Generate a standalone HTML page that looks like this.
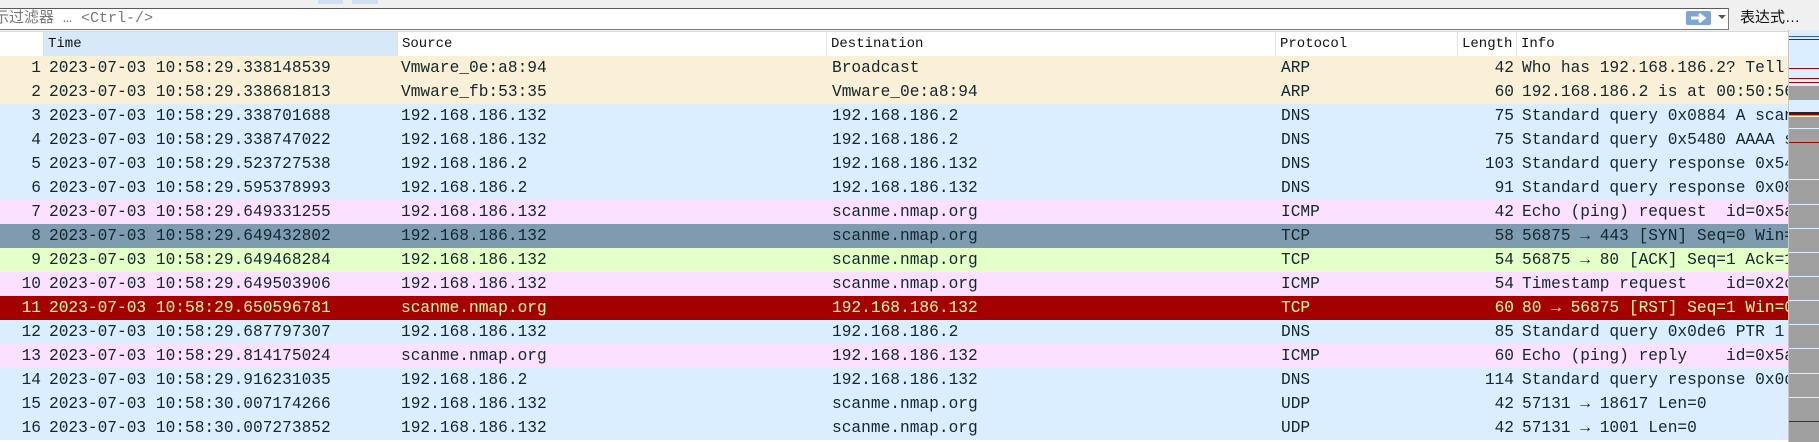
<!DOCTYPE html>
<html><head><meta charset="utf-8">
<style>
*{margin:0;padding:0;box-sizing:border-box}
body{width:1819px;height:442px;overflow:hidden;background:#fff;position:relative;font-family:"Liberation Mono",monospace;color:#12272e}
.top{position:absolute;left:0;top:0;width:1819px;height:31px;background:#f0f0f0}
.inp{position:absolute;left:-2px;top:8px;width:1731px;height:22px;background:#fff;border:1px solid #7a7a7a;border-top-color:#5a5a5a}
.ft{position:absolute;left:-6px;top:9px;font:15px "Liberation Mono","Noto Sans CJK SC",monospace;color:#777;line-height:20px;white-space:pre}
.arrow{position:absolute;left:1686px;top:11px;width:25px;height:14px;background:#7da6d6;border-radius:2px}
.dd{position:absolute;left:1718px;top:15px;width:0;height:0;border-left:4px solid transparent;border-right:4px solid transparent;border-top:4px solid #555}
.expr{position:absolute;left:1740px;top:8px;font:15px "Liberation Sans","Noto Sans CJK SC",sans-serif;line-height:20px;color:#111}
.hdr{position:absolute;top:31px;left:0;width:1788px;height:25px;background:#fff;border-top:1px solid #d8d8d8}
.hc{position:absolute;top:0;height:24px;line-height:24px;font-size:14px;padding-left:4px;border-right:1px solid #e2e2e2;color:#111;white-space:pre}
.row{position:absolute;left:0;width:1788px;height:24px;line-height:24px;font-size:16.2px;white-space:pre;overflow:hidden}
.row span{position:absolute;top:0}
.n{right:1747px;text-align:right}
.t{left:49px}.s{left:401px}.d{left:832px}.p{left:1281px}
.l{right:274px;text-align:right}.i{left:1522px}
.arp{background:#faf0d7}.dns{background:#daeeff}.icmp{background:#fce0ff}
.syn{background:#7e9bb0}.ack{background:#e4ffc7}.rst{background:#a40000;color:#fffc9c}
.mm{position:absolute;left:1788px;top:30px;width:31px;height:412px;background:#a0a0a0;border-left:1px solid #c8c8c8}
.mm div{position:absolute;left:0;width:30px}
</style></head><body>
<div class="top"></div>
<div style="position:absolute;left:318px;top:0;width:25px;height:4px;background:#cfe0f2"></div>
<div style="position:absolute;left:352px;top:0;width:26px;height:4px;background:#cfe0f2"></div>
<div class="inp"></div>
<div class="ft">示过滤器 … &lt;Ctrl-/&gt;</div>
<div class="arrow"><svg width="25" height="14" viewBox="0 0 25 14"><path d="M5 7H17M13 3L18 7L13 11" stroke="#fff" stroke-width="3" fill="none"/></svg></div>
<div class="dd"></div>
<div class="expr">表达式…</div>

<div class="hdr">
<div class="hc" style="left:0;width:44px"></div>
<div class="hc" style="left:44px;width:354px;background:#d7e8f8">Time</div>
<div class="hc" style="left:398px;width:429px">Source</div>
<div class="hc" style="left:827px;width:449px">Destination</div>
<div class="hc" style="left:1276px;width:182px">Protocol</div>
<div class="hc" style="left:1458px;width:59px">Length</div>
<div class="hc" style="left:1517px;width:271px;border-right:none">Info</div>
</div>

<div class="row arp" style="top:56px"><span class="n">1</span><span class="t">2023-07-03 10:58:29.338148539</span><span class="s">Vmware_0e:a8:94</span><span class="d">Broadcast</span><span class="p">ARP</span><span class="l">42</span><span class="i">Who has 192.168.186.2? Tell 192.168.186.132</span></div>
<div class="row arp" style="top:80px"><span class="n">2</span><span class="t">2023-07-03 10:58:29.338681813</span><span class="s">Vmware_fb:53:35</span><span class="d">Vmware_0e:a8:94</span><span class="p">ARP</span><span class="l">60</span><span class="i">192.168.186.2 is at 00:50:56:fb:53:35</span></div>
<div class="row dns" style="top:104px"><span class="n">3</span><span class="t">2023-07-03 10:58:29.338701688</span><span class="s">192.168.186.132</span><span class="d">192.168.186.2</span><span class="p">DNS</span><span class="l">75</span><span class="i">Standard query 0x0884 A scanme.nmap.org</span></div>
<div class="row dns" style="top:128px"><span class="n">4</span><span class="t">2023-07-03 10:58:29.338747022</span><span class="s">192.168.186.132</span><span class="d">192.168.186.2</span><span class="p">DNS</span><span class="l">75</span><span class="i">Standard query 0x5480 AAAA scanme.nmap.org</span></div>
<div class="row dns" style="top:152px"><span class="n">5</span><span class="t">2023-07-03 10:58:29.523727538</span><span class="s">192.168.186.2</span><span class="d">192.168.186.132</span><span class="p">DNS</span><span class="l">103</span><span class="i">Standard query response 0x5480</span></div>
<div class="row dns" style="top:176px"><span class="n">6</span><span class="t">2023-07-03 10:58:29.595378993</span><span class="s">192.168.186.2</span><span class="d">192.168.186.132</span><span class="p">DNS</span><span class="l">91</span><span class="i">Standard query response 0x0884</span></div>
<div class="row icmp" style="top:200px"><span class="n">7</span><span class="t">2023-07-03 10:58:29.649331255</span><span class="s">192.168.186.132</span><span class="d">scanme.nmap.org</span><span class="p">ICMP</span><span class="l">42</span><span class="i">Echo (ping) request  id=0x5a1b</span></div>
<div class="row syn" style="top:224px"><span class="n">8</span><span class="t">2023-07-03 10:58:29.649432802</span><span class="s">192.168.186.132</span><span class="d">scanme.nmap.org</span><span class="p">TCP</span><span class="l">58</span><span class="i">56875 → 443 [SYN] Seq=0 Win=1024</span></div>
<div class="row ack" style="top:248px"><span class="n">9</span><span class="t">2023-07-03 10:58:29.649468284</span><span class="s">192.168.186.132</span><span class="d">scanme.nmap.org</span><span class="p">TCP</span><span class="l">54</span><span class="i">56875 → 80 [ACK] Seq=1 Ack=1</span></div>
<div class="row icmp" style="top:272px"><span class="n">10</span><span class="t">2023-07-03 10:58:29.649503906</span><span class="s">192.168.186.132</span><span class="d">scanme.nmap.org</span><span class="p">ICMP</span><span class="l">54</span><span class="i">Timestamp request    id=0x2c1d</span></div>
<div class="row rst" style="top:296px"><span class="n">11</span><span class="t">2023-07-03 10:58:29.650596781</span><span class="s">scanme.nmap.org</span><span class="d">192.168.186.132</span><span class="p">TCP</span><span class="l">60</span><span class="i">80 → 56875 [RST] Seq=1 Win=0</span></div>
<div class="row dns" style="top:320px"><span class="n">12</span><span class="t">2023-07-03 10:58:29.687797307</span><span class="s">192.168.186.132</span><span class="d">192.168.186.2</span><span class="p">DNS</span><span class="l">85</span><span class="i">Standard query 0x0de6 PTR 1</span></div>
<div class="row icmp" style="top:344px"><span class="n">13</span><span class="t">2023-07-03 10:58:29.814175024</span><span class="s">scanme.nmap.org</span><span class="d">192.168.186.132</span><span class="p">ICMP</span><span class="l">60</span><span class="i">Echo (ping) reply    id=0x5a1b</span></div>
<div class="row dns" style="top:368px"><span class="n">14</span><span class="t">2023-07-03 10:58:29.916231035</span><span class="s">192.168.186.2</span><span class="d">192.168.186.132</span><span class="p">DNS</span><span class="l">114</span><span class="i">Standard query response 0x0de6</span></div>
<div class="row dns" style="top:392px"><span class="n">15</span><span class="t">2023-07-03 10:58:30.007174266</span><span class="s">192.168.186.132</span><span class="d">scanme.nmap.org</span><span class="p">UDP</span><span class="l">42</span><span class="i">57131 → 18617 Len=0</span></div>
<div class="row dns" style="top:416px"><span class="n">16</span><span class="t">2023-07-03 10:58:30.007273852</span><span class="s">192.168.186.132</span><span class="d">scanme.nmap.org</span><span class="p">UDP</span><span class="l">42</span><span class="i">57131 → 1001 Len=0</span></div>

<div class="mm">
<div style="top:0;height:56px;background:#daeeff"></div>
<div style="top:6px;height:1px;background:#3060c0"></div>
<div style="top:9px;height:1px;background:#a40000"></div>
<div style="top:38px;height:1px;background:#a40000"></div>
<div style="top:48px;height:1px;background:#a40000"></div>
<div style="top:52px;height:1px;background:#a40000"></div>
<div style="top:56px;height:14px;background:#a0a0a0"></div>
<div style="top:70px;height:12px;background:#daeeff"></div>
<div style="top:82px;height:2px;background:#1a2a30"></div>
<div style="top:84px;height:1px;background:#a40000"></div>
<div style="top:86px;height:1px;background:#e4ffc7"></div>
<div style="top:98px;height:1px;background:#daeeff"></div>
<div style="top:112px;height:1px;background:#a40000"></div>
<div style="top:149px;height:1px;background:#daeeff"></div>
<div style="top:174px;height:1px;background:#daeeff"></div>
<div style="top:198px;height:1px;background:#daeeff"></div>
<div style="top:222px;height:1px;background:#daeeff"></div>
<div style="top:246px;height:1px;background:#daeeff"></div>
<div style="top:270px;height:1px;background:#daeeff"></div>
<div style="top:294px;height:1px;background:#daeeff"></div>
<div style="top:318px;height:1px;background:#daeeff"></div>
<div style="top:343px;height:1px;background:#daeeff"></div>
<div style="top:367px;height:1px;background:#daeeff"></div>
<div style="top:391px;height:1px;background:#a40000"></div>
</div>
</body></html>
